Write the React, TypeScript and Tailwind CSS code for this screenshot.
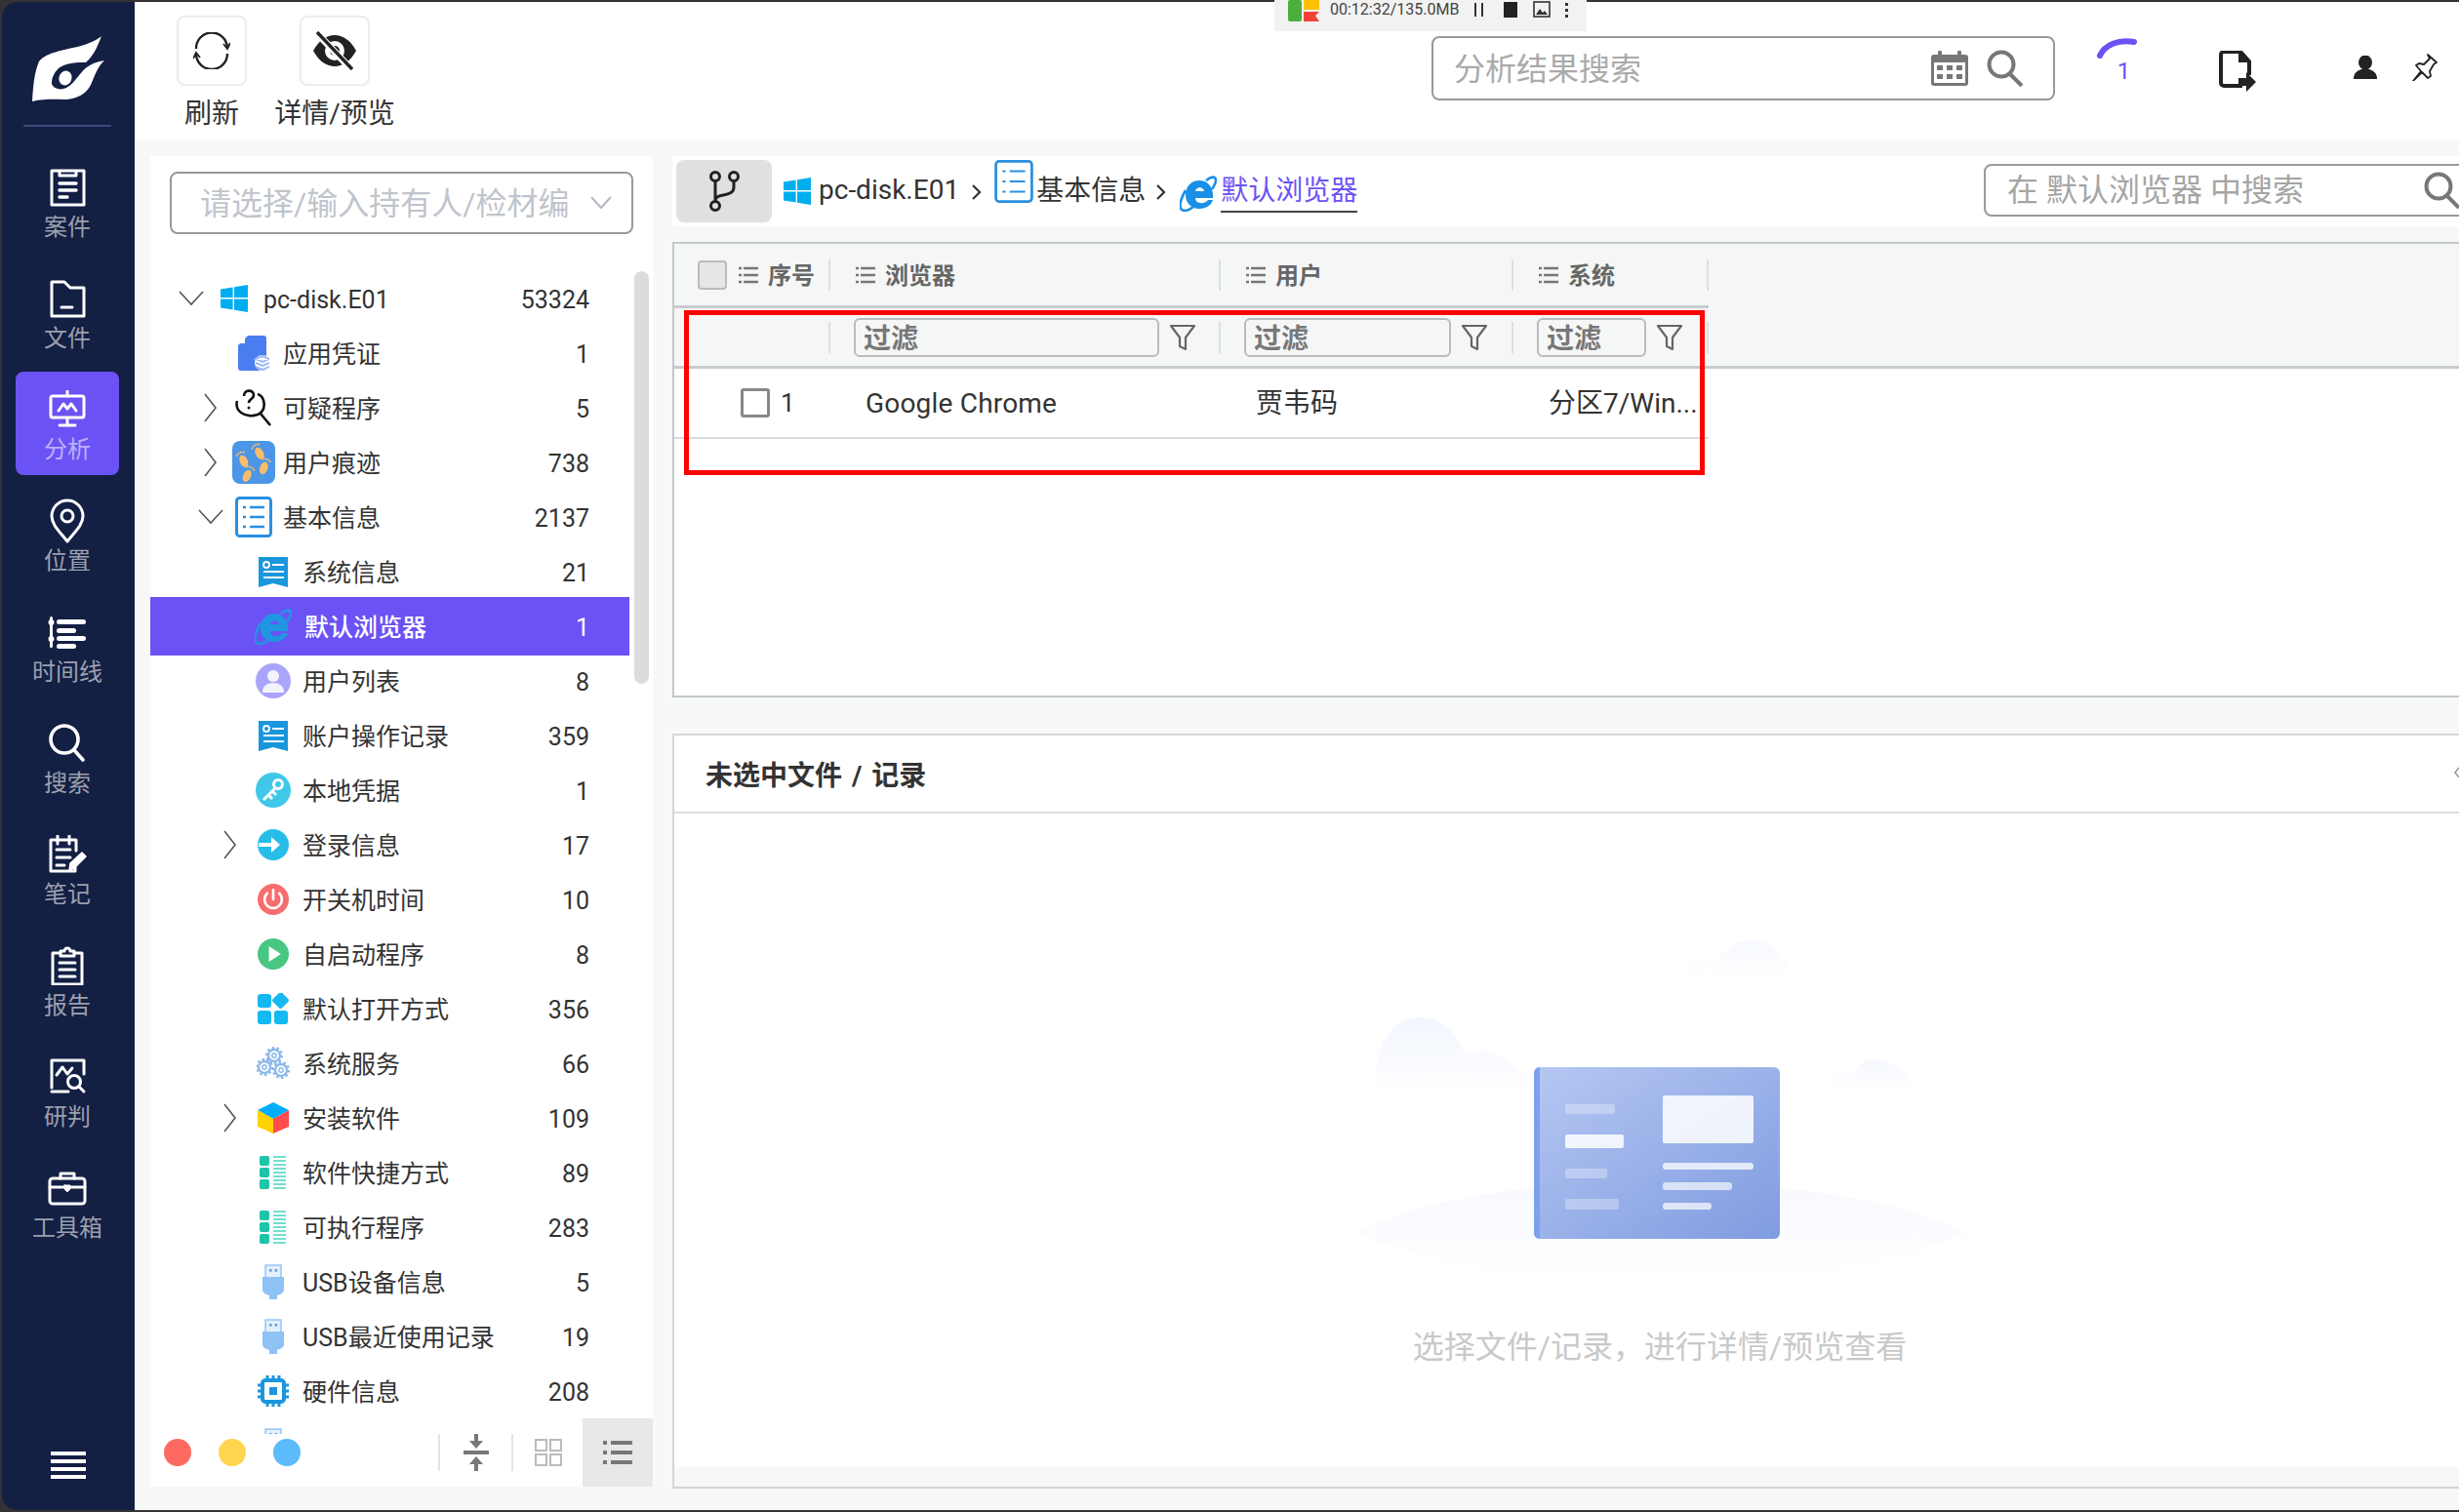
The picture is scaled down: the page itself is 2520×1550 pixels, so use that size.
import type { ReactNode } from "react";

const LineIcon = ({ children, w = 40, h = 40 }: { children: ReactNode; w?: number; h?: number }) => (
  <svg width={w} height={h} viewBox={`0 0 ${w} ${h}`} fill="none" stroke="currentColor" strokeWidth="3" strokeLinecap="round" strokeLinejoin="round">
    {children}
  </svg>
);

const navItems: { label: string; icon: ReactNode; active?: boolean }[] = [
  {
    label: "案件",
    icon: (
      <LineIcon>
        <path d="M12 3H4v35h33V3h-8v5H12V3zM12 3h17" />
        <path d="M12 16h17M12 23h17M12 30h8" strokeWidth="3.4" />
      </LineIcon>
    ),
  },
  {
    label: "文件",
    icon: (
      <LineIcon>
        <path d="M4 3h13l6 6h14v29H4V3z" />
        <path d="M14 29h11" />
      </LineIcon>
    ),
  },
  {
    label: "分析",
    active: true,
    icon: (
      <LineIcon>
        <rect x="3" y="6" width="34" height="22" rx="2" />
        <path d="M20 1v5M11 21l5-7 4 5 4-5 5 7M20 28v6M12 36h16" />
      </LineIcon>
    ),
  },
  {
    label: "位置",
    icon: (
      <LineIcon w={40} h={46}>
        <path d="M20 44C12 34 4 27 4 18a16 16 0 0 1 32 0c0 9-8 16-16 26z" />
        <circle cx="20" cy="18" r="6" />
      </LineIcon>
    ),
  },
  {
    label: "时间线",
    icon: (
      <svg width="40" height="34" viewBox="0 0 40 34" fill="#fff">
        <rect x="2" y="1" width="3" height="32" rx="1.5" />
        <circle cx="3.5" cy="7" r="3" />
        <circle cx="3.5" cy="24" r="3" />
        <rect x="9" y="4" width="30" height="5" rx="2.5" />
        <rect x="9" y="13" width="20" height="5" rx="2.5" />
        <rect x="9" y="21" width="30" height="5" rx="2.5" />
        <rect x="9" y="29" width="20" height="5" rx="2.5" />
      </svg>
    ),
  },
  {
    label: "搜索",
    icon: (
      <LineIcon>
        <circle cx="17" cy="16" r="14" strokeWidth="3.6" />
        <path d="M27 27l9 10" strokeWidth="3.6" />
      </LineIcon>
    ),
  },
  {
    label: "笔记",
    icon: (
      <LineIcon>
        <path d="M28 31v6H3V5h26v11" />
        <path d="M10 1v8M22 1v8M9 15h14M9 23h14M9 31h8" />
        <path d="M22 36l1-7 12-11 4 4-12 12-5 2z" fill="currentColor" strokeWidth="1.5" />
      </LineIcon>
    ),
  },
  {
    label: "报告",
    icon: (
      <LineIcon>
        <path d="M13 7H5v32h30V7h-8" />
        <path d="M13 10V5h4a3 3 0 0 1 6 0h4v5H13z" />
        <path d="M12 17h16M12 24h16M12 31h16" />
      </LineIcon>
    ),
  },
  {
    label: "研判",
    icon: (
      <LineIcon>
        <path d="M4 31V3h33v14M4 35h17" />
        <path d="M9 18l6-8 5 7 5-6" />
        <circle cx="27" cy="25" r="6.5" />
        <path d="M32 30l5 5" />
      </LineIcon>
    ),
  },
  {
    label: "工具箱",
    icon: (
      <LineIcon w={40} h={36}>
        <rect x="2" y="8" width="36" height="26" rx="3" />
        <path d="M13 8V3h14v5M2 17h14M24 17h14" />
        <path d="M17 15h6v4l-3 3-3-3v-4z" fill="currentColor" strokeWidth="1" />
      </LineIcon>
    ),
  },
];

const Circle = ({ color, children }: { color: string; children: ReactNode }) => (
  <svg width="36" height="36" viewBox="0 0 36 36">
    <circle cx="18" cy="18" r="18" fill={color} />
    {children}
  </svg>
);

const WinIcon = ({ s = 28 }: { s?: number }) => (
  <svg width={s} height={s} viewBox="0 0 28 28" fill="#00adef">
    <path d="M0 4.5l12.6-2v10.6H0zM14 2.3L28 0v13.1H14zM0 14.6h12.6v10.8L0 23.5zM14 14.6h14V28l-14-2.3z" />
  </svg>
);

const ListBlue = () => (
  <svg width="38" height="42" viewBox="0 0 38 42" fill="none" stroke="#2a8fe0">
    <rect x="1.5" y="1.5" width="35" height="39" rx="3" strokeWidth="3" />
    <path d="M8 11h3M15 11h15M8 21h3M15 21h15M8 31h3M15 31h15" strokeWidth="2.6" />
  </svg>
);

const CardBlue = () => (
  <svg width="32" height="32" viewBox="0 0 32 32">
    <path d="M1 1h30v31l-15-4-15 4z" fill="#1a96dc" />
    <circle cx="9" cy="9" r="3" fill="none" stroke="#fff" strokeWidth="1.8" />
    <path d="M15 9h12M6 16h21M6 22h21" stroke="#fff" strokeWidth="2" />
  </svg>
);

const IeIcon = ({ s = 38, color = "#1e98e0" }: { s?: number; color?: string }) => (
  <svg width={s} height={s} viewBox="0 0 38 38">
    <path d="M6 21C6 12 12 6 20 6s14 6 14 15v3H16c0 6 9 7 13 2h5c-2 6-8 9-14 9-8 0-14-6-14-14zM16 17h9c-1-5-8-5-9 0z" fill={color} fillRule="evenodd" />
    <path d="M27 6c5-4 10-5 10 0 0 3-2 6-4 9M6 16C1 25-1 33 2 36c3 2 8 0 12-3" fill="none" stroke={color} strokeWidth="2.6" />
  </svg>
);

const Foot = ({ x, y, r }: { x: number; y: number; r: number }) => (
  <g transform={`translate(${x} ${y}) rotate(${r})`} fill="#f9bd6a">
    <ellipse cx="0" cy="2" rx="4" ry="6.5" />
    <circle cx="-4" cy="-6.5" r="1.1" />
    <circle cx="-1.4" cy="-7.5" r="1.1" />
    <circle cx="1.2" cy="-7.5" r="1.1" />
    <circle cx="3.8" cy="-6.5" r="1.1" />
  </g>
);

const GreenList = () => (
  <svg width="28" height="34" viewBox="0 0 28 34">
    {[0, 12, 24].map((y) => (
      <g key={y}>
        <rect x="0" y={y} width="10" height="10" rx="2" fill="#1cc4a8" />
        <path d={`M14 ${y + 1}h13M14 ${y + 5}h13M14 ${y + 9}h13`} stroke="#45d6be" strokeWidth="1.6" />
      </g>
    ))}
  </svg>
);

const UsbIcon = () => (
  <svg width="26" height="36" viewBox="0 0 26 36">
    <rect x="5" y="1" width="16" height="13" fill="#e4efFb" stroke="#8fc2f5" strokeWidth="1.4" />
    <rect x="9" y="5" width="2.6" height="2.6" fill="#5f9fe4" />
    <rect x="14.6" y="5" width="2.6" height="2.6" fill="#5f9fe4" />
    <path d="M2 13h22v13c0 3-3 5-7 6v4h-8v-4c-4-1-7-3-7-6z" fill="#8fc2f5" />
  </svg>
);

const GearGlyph = ({ x, y }: { x: number; y: number }) => (
  <g transform={`translate(${x} ${y})`} fill="none" stroke="#8cb8ea">
    <circle r="6" strokeWidth="2.4" strokeDasharray="none" />
    <circle r="8" strokeWidth="2.2" strokeDasharray="2.5 2.5" />
    <circle r="2.2" strokeWidth="1.4" />
  </g>
);

type Row = { level: number; label?: string; count?: string; arrow?: "open" | "closed"; icon: ReactNode; selected?: boolean };

const rows: Row[] = [
  { level: 0, label: "pc-disk.E01", count: "53324", arrow: "open", icon: <WinIcon /> },
  {
    level: 1,
    label: "应用凭证",
    count: "1",
    icon: (
      <svg width="32" height="36" viewBox="0 0 32 36">
        <path d="M10 0h16a3 3 0 0 1 3 3v30a3 3 0 0 1-3 3H3a3 3 0 0 1-3-3V10z" fill="#4a7ef0" />
        <path d="M7 1v7H1z" fill="#fff" />
        <circle cx="25" cy="28" r="8" fill="#fff" />
        <path d="M25 21l7 3-7 3-7-3zM18 28l7 3 7-3M18 32l7 3 7-3" fill="none" stroke="#9db8f5" strokeWidth="2" />
      </svg>
    ),
  },
  {
    level: 1,
    label: "可疑程序",
    count: "5",
    arrow: "closed",
    icon: (
      <svg width="38" height="40" viewBox="0 0 38 40" fill="none" stroke="#111" strokeWidth="2.6">
        <path d="M23 6c7 2 8 12 5 17-4 6-15 7-22 2-4-3-5-8-4-12" />
        <path d="M26 26l10 12" />
        <path d="M9 8c0-7 10-7 10-1 0 4-5 4-5 8" />
        <circle cx="14" cy="20" r="1.5" fill="#111" stroke="none" />
      </svg>
    ),
  },
  {
    level: 1,
    label: "用户痕迹",
    count: "738",
    arrow: "closed",
    icon: (
      <svg width="44" height="44" viewBox="0 0 44 44">
        <rect width="44" height="44" rx="8" fill="#4b96e6" />
        <Foot x={11} y={19} r={-25} />
        <Foot x={16} y={34} r={25} />
        <Foot x={27} y={11} r={-30} />
        <Foot x={33} y={26} r={20} />
      </svg>
    ),
  },
  { level: 1, label: "基本信息", count: "2137", arrow: "open", icon: <ListBlue /> },
  { level: 2, label: "系统信息", count: "21", icon: <CardBlue /> },
  { level: 2, label: "默认浏览器", count: "1", selected: true, icon: <IeIcon /> },
  {
    level: 2,
    label: "用户列表",
    count: "8",
    icon: (
      <Circle color="#a9a5fa">
        <circle cx="18" cy="13" r="6" fill="#f3f3fd" />
        <path d="M7 29c0-12 22-12 22 0 0 1-1 1-2 1H9c-1 0-2 0-2-1z" fill="#f3f3fd" />
      </Circle>
    ),
  },
  { level: 2, label: "账户操作记录", count: "359", icon: <CardBlue /> },
  {
    level: 2,
    label: "本地凭据",
    count: "1",
    icon: (
      <Circle color="#3fc8e8">
        <circle cx="23" cy="12" r="4.5" fill="none" stroke="#fff" strokeWidth="3" />
        <path d="M20 16L8 28M13 23l4 4M17 19l4 4" stroke="#fff" strokeWidth="3" />
      </Circle>
    ),
  },
  {
    level: 2,
    label: "登录信息",
    count: "17",
    arrow: "closed",
    icon: (
      <svg width="32" height="32" viewBox="0 0 32 32">
        <circle cx="16" cy="16" r="16" fill="#28bde8" />
        <path d="M1 14h13V8l9 8-9 8v-6H1z" fill="#fff" />
      </svg>
    ),
  },
  {
    level: 2,
    label: "开关机时间",
    count: "10",
    icon: (
      <svg width="32" height="32" viewBox="0 0 36 36">
        <circle cx="18" cy="18" r="18" fill="#f76c6c" />
        <path d="M11 11a10 10 0 1 0 14 0M18 7v11" fill="none" stroke="#fff" strokeWidth="3" strokeLinecap="round" />
      </svg>
    ),
  },
  {
    level: 2,
    label: "自启动程序",
    count: "8",
    icon: (
      <svg width="32" height="32" viewBox="0 0 36 36">
        <circle cx="18" cy="18" r="18" fill="#48c782" />
        <path d="M13 9l14 9-14 9z" fill="#fff" />
      </svg>
    ),
  },
  {
    level: 2,
    label: "默认打开方式",
    count: "356",
    icon: (
      <svg width="32" height="32" viewBox="0 0 32 32" fill="#14b8f2">
        <rect x="0" y="1" width="14" height="14" rx="3" />
        <rect x="17" y="1" width="13" height="13" rx="2" transform="rotate(45 23.5 7.5)" />
        <rect x="0" y="18" width="14" height="14" rx="3" />
        <rect x="17" y="18" width="14" height="14" rx="3" />
      </svg>
    ),
  },
  {
    level: 2,
    label: "系统服务",
    count: "66",
    icon: (
      <svg width="34" height="34" viewBox="0 0 34 34">
        <GearGlyph x={18} y={9} />
        <GearGlyph x={8} y={21} />
        <GearGlyph x={25} y={24} />
      </svg>
    ),
  },
  {
    level: 2,
    label: "安装软件",
    count: "109",
    arrow: "closed",
    icon: (
      <svg width="32" height="32" viewBox="0 0 32 32">
        <path d="M16 0l16 8-16 9L0 8z" fill="#00aeff" />
        <path d="M0 8l16 9v15L0 25z" fill="#ffd200" />
        <path d="M32 8l-16 9v15l16-7z" fill="#ff4d4d" />
      </svg>
    ),
  },
  { level: 2, label: "软件快捷方式", count: "89", icon: <GreenList /> },
  { level: 2, label: "可执行程序", count: "283", icon: <GreenList /> },
  { level: 2, label: "USB设备信息", count: "5", icon: <UsbIcon /> },
  { level: 2, label: "USB最近使用记录", count: "19", icon: <UsbIcon /> },
  {
    level: 2,
    label: "硬件信息",
    count: "208",
    icon: (
      <svg width="32" height="32" viewBox="0 0 32 32" fill="none" stroke="#1a96dc">
        <rect x="5" y="5" width="22" height="22" rx="3" strokeWidth="4" />
        <rect x="12" y="12" width="8" height="8" fill="#1a96dc" stroke="none" />
        <path d="M10 0v5M16 0v5M22 0v5M10 27v5M16 27v5M22 27v5M0 10h5M0 16h5M0 22h5M27 10h5M27 16h5M27 22h5" strokeWidth="3" />
      </svg>
    ),
  },
  { level: 2, icon: <UsbIcon /> },
];

const levelPad = ["pl-[22px]", "pl-[42px]", "pl-[62px]"];

const Chevron = ({ open }: { open: boolean }) =>
  open ? (
    <svg width="26" height="16" viewBox="0 0 26 16" fill="none" stroke="#555" strokeWidth="1.6">
      <path d="M1 1l12 13L25 1" />
    </svg>
  ) : (
    <svg width="14" height="30" viewBox="0 0 14 30" fill="none" stroke="#555" strokeWidth="1.6">
      <path d="M1 1l11 14L1 29" />
    </svg>
  );

const SearchGlyph = ({ s = 38 }: { s?: number }) => (
  <svg width={s} height={s} viewBox="0 0 38 38" fill="none" stroke="#777" strokeWidth="4">
    <circle cx="15" cy="15" r="12.5" />
    <path d="M24 25l12 12" />
  </svg>
);

const Lines = () => (
  <svg width="20" height="18" viewBox="0 0 20 18" stroke="#777" strokeWidth="2.4">
    <path d="M0 2h3M5 2h15M0 9h3M5 9h15M0 16h3M5 16h15" />
  </svg>
);

const Funnel = () => (
  <svg width="28" height="28" viewBox="0 0 28 28" fill="none" stroke="#666" strokeWidth="2.2" strokeLinejoin="round">
    <path d="M2 2h24l-9 12v12l-6-3v-9z" />
  </svg>
);

const Crumb = () => (
  <svg width="10" height="18" viewBox="0 0 10 18" fill="none" stroke="#333" strokeWidth="2.2">
    <path d="M1 2l7 7-7 7" />
  </svg>
);

const columns = [
  { label: "浏览器", w: "w-[400px]", input: "w-[313px]" },
  { label: "用户", w: "w-[300px]", input: "w-[212px]" },
  { label: "系统", w: "w-[200px]", input: "w-[112px]" },
];

export default function App() {
  return (
    <div className="w-[2520px] h-[1550px] bg-[#333333] py-[2px] overflow-hidden relative font-['Roboto','Noto_Sans_CJK_SC',sans-serif] text-[#333]">
      <div className="flex h-full">
        {/* sidebar */}
        <aside className="w-[136px] ml-[2px] shrink-0 bg-[#131f43] rounded-l-[16px] flex flex-col pt-[18px] pb-[32px]">
          <svg width="110" height="110" viewBox="0 0 110 110" className="ml-[18px]">
            <path d="M13 84C14 68 15 55 20 43C28 33 48 31 63 27C72 24 78 22 84 17C80 27 77 36 68 44C60 44 48 44 40 50C35 55 33 60 33 66C35 71 42 73 48 70C58 65 62 52 72 47C77 44 82 43 87 42C80 48 77 58 73 67C68 77 58 81 48 82C38 82 25 81 13 84Z" fill="#fff" />
            <ellipse cx="47" cy="60" rx="6.5" ry="7.5" transform="rotate(20 47 60)" fill="#fff" />
          </svg>
          <div className="h-[2px] w-[90px] ml-[22px] bg-[#3d4a7a] -mt-[2px]" />
          <nav className="flex flex-col gap-2 mt-[23px] ml-[14px]">
            {navItems.map((n) => (
              <div
                key={n.label}
                className={`w-[106px] h-[106px] rounded-[8px] flex flex-col items-center pt-[19px] text-[#fff] ${n.active ? "bg-[#6b52f5]" : ""}`}
              >
                <div className="h-10 flex items-center justify-center">{n.icon}</div>
                <span className={`text-[24px] leading-[30px] mt-[6px] ${n.active ? "text-[#bdb2fa]" : "text-[#9ca0ae]"}`}>{n.label}</span>
              </div>
            ))}
          </nav>
          <div className="mt-auto ml-[50px] w-[36px] flex flex-col gap-[4px]">
            <div className="h-[4px] bg-white" />
            <div className="h-[4px] bg-white" />
            <div className="h-[4px] bg-white" />
            <div className="h-[4px] bg-white" />
          </div>
        </aside>

        <main className="flex-1 min-w-0 flex flex-col bg-[#f7f8f8]">
          {/* toolbar */}
          <header className="h-[142px] shrink-0 bg-white flex items-start pl-[43px] pr-[22px]">
            <div className="flex flex-col items-center w-[72px] pt-[14px]">
              <div className="w-[72px] h-[72px] rounded-[8px] border-2 border-[#ececec] flex items-center justify-center">
                <svg width="38" height="38" viewBox="0 0 38 38" fill="none" stroke="#222" strokeWidth="2.4">
                  <path d="M3 17A16 16 0 0 1 35 16" />
                  <path d="M35 22A16 16 0 0 1 3 22" />
                  <path d="M31 12l4 5 3-6M7 26l-4-5-3 6" strokeWidth="1.8" />
                </svg>
              </div>
              <span className="text-[28px] leading-[34px] mt-3 whitespace-nowrap">刷新</span>
            </div>
            <div className="flex flex-col items-center w-[124px] ml-[28px] pt-[14px]">
              <div className="w-[72px] h-[72px] rounded-[8px] border-2 border-[#ececec] flex items-center justify-center">
                <svg width="46" height="40" viewBox="0 0 46 40">
                  <path d="M1 20C7 9 15 4 23 4s16 5 22 16c-6 11-14 16-22 16S7 31 1 20z" fill="#222" />
                  <circle cx="23" cy="20" r="10" fill="#fff" />
                  <circle cx="23" cy="20" r="5" fill="#222" />
                  <path d="M4 1l36 38" stroke="#fff" strokeWidth="7" />
                  <path d="M5 1l36 38" stroke="#222" strokeWidth="3.4" />
                </svg>
              </div>
              <span className="text-[28px] leading-[34px] mt-3 whitespace-nowrap">详情/预览</span>
            </div>

            <div className="ml-auto mt-[35px] w-[639px] h-[66px] rounded-[8px] border-2 border-[#999] flex items-center pl-[21px] pr-[30px]">
              <span className="text-[32px] text-[#aaa] mt-[2px]">分析结果搜索</span>
              <svg width="40" height="38" viewBox="0 0 40 38" className="ml-auto">
                <rect x="1" y="5" width="38" height="32" rx="3" fill="#777" />
                <rect x="4" y="13" width="32" height="21" fill="#fff" />
                <rect x="8" y="1" width="4" height="7" rx="1" fill="#777" />
                <rect x="28" y="1" width="4" height="7" rx="1" fill="#777" />
                <path d="M7 16h6v5H7zM17 16h6v5h-6zM27 16h6v5h-6zM7 25h6v5H7zM17 25h6v5h-6zM27 25h6v5h-6z" fill="#777" />
              </svg>
              <div className="ml-[18px]">
                <SearchGlyph />
              </div>
            </div>

            <div className="ml-[43px] mt-[36px] w-[41px] flex flex-col items-center">
              <svg width="41" height="22" viewBox="0 0 41 22" fill="none" stroke="#6b52f5" strokeWidth="6" strokeLinecap="round">
                <path d="M3 19C8 8 22 2 38 5" />
              </svg>
              <span className="text-[24px] leading-[26px] text-[#6b52f5] ml-[14px]">1</span>
            </div>
            <svg width="38" height="42" viewBox="0 0 38 42" className="ml-[84px] mt-[50px]" fill="none" stroke="#222">
              <path d="M24 36H5a3 3 0 0 1-3-3V4a3 3 0 0 1 3-3h17l9 10v14" strokeWidth="4" />
              <path d="M21 1v10h10z" fill="#222" strokeWidth="2" />
              <path d="M20 28h8v-6l10 10-10 10v-6h-8z" fill="#222" stroke="none" />
            </svg>
            <svg width="24" height="24" viewBox="0 0 24 24" className="ml-[100px] mt-[55px]" fill="#222">
              <ellipse cx="12" cy="7" rx="7" ry="7.5" />
              <path d="M0 24c0-6 3-8 8-10h8c5 2 8 4 8 10z" />
            </svg>
            <svg width="28" height="28" viewBox="0 0 28 28" className="ml-[34px] mt-[53px]" fill="none" stroke="#222" strokeWidth="1.8" strokeLinejoin="round">
              <path d="M18 1l9 8-3 2-4 7 1 5-3 2-6-6-9 9 8-10-5-6 3-2 5 1 6-6z" />
            </svg>
          </header>

          <div className="flex-1 min-h-0 flex pt-4 pl-4 gap-5">
            {/* tree panel */}
            <section className="w-[515px] h-[1364px] shrink-0 bg-white flex flex-col relative">
              <div className="mx-5 mt-4 h-[64px] shrink-0 rounded-[8px] border-2 border-[#999] flex items-center pl-[29px] pr-[20px] overflow-hidden">
                <span className="text-[32px] text-[#c0c4cc] whitespace-nowrap mt-[2px]">请选择/输入持有人/检材编</span>
                <svg width="22" height="14" viewBox="0 0 22 14" fill="none" stroke="#b4b8c0" strokeWidth="2" className="ml-auto">
                  <path d="M1 1l10 11L21 1" />
                </svg>
              </div>
              <div className="flex-1 min-h-0 overflow-hidden mt-[38px] relative">
                {rows.map((r, i) => (
                  <div
                    key={i}
                    className={`flex items-center w-[491px] ${levelPad[r.level]} pr-[41px] ${r.selected ? "h-[60px] -my-[2px] bg-[#6b52f5] text-white font-medium relative" : "h-[56px]"}`}
                  >
                    <div className="w-[40px] h-[40px] flex items-center justify-center shrink-0">
                      {r.arrow ? <Chevron open={r.arrow === "open"} /> : null}
                    </div>
                    <div className="w-[48px] h-[44px] flex items-center justify-center shrink-0">{r.icon}</div>
                    <span className={`text-[25px] mt-[3px] whitespace-nowrap ${r.selected ? "ml-[8px]" : "ml-[6px]"}`}>{r.label}</span>
                    <span className="text-[25px] mt-[3px] ml-auto font-normal">{r.count}</span>
                  </div>
                ))}
                <div className="absolute left-[496px] top-0 w-[15px] h-[423px] rounded-full bg-[#dcdcdc]" />
              </div>
              <div className="h-[54px] shrink-0 bg-white flex items-center pl-[14px] pb-[16px] relative">
                <div className="w-[28px] h-[28px] rounded-full bg-[#ff6a60]" />
                <div className="w-[28px] h-[28px] rounded-full bg-[#ffd550] ml-[28px]" />
                <div className="w-[28px] h-[28px] rounded-full bg-[#5bbbfb] ml-[28px]" />
                <div className="w-[2px] h-[38px] bg-[#e4e4e4] ml-[141px]" />
                <svg width="26" height="38" viewBox="0 0 26 38" className="ml-[24px]" fill="#777">
                  <path d="M11 0h4v7h5l-7 8-7-8h5zM0 17h26v4H0zM13 23l7 8h-5v7h-4v-7H6z" />
                </svg>
                <div className="w-[2px] h-[38px] bg-[#e4e4e4] ml-[23px]" />
                <svg width="28" height="28" viewBox="0 0 28 28" className="ml-[22px]" fill="none" stroke="#bbb" strokeWidth="2">
                  <rect x="1" y="1" width="11" height="11" />
                  <rect x="16" y="1" width="11" height="11" />
                  <rect x="1" y="16" width="11" height="11" />
                  <rect x="16" y="16" width="11" height="11" />
                </svg>
                <div className="absolute right-0 bottom-0 w-[72px] h-[70px] bg-[#e8e8e8] flex items-center justify-center">
                  <svg width="30" height="26" viewBox="0 0 30 26" fill="#777">
                    <path d="M0 1h4v4H0zM8 1h22v4H8zM0 11h4v4H0zM8 11h22v4H8zM0 21h4v4H0zM8 21h22v4H8z" />
                  </svg>
                </div>
              </div>
            </section>

            <div className="flex-1 min-w-0 flex flex-col">
              {/* breadcrumb */}
              <div className="h-[72px] shrink-0 bg-white flex items-center pl-1 text-[28px]">
                <div className="w-[98px] h-[64px] rounded-[8px] bg-[#e0e0e0] flex items-center justify-center">
                  <svg width="32" height="44" viewBox="0 0 32 44" fill="none" stroke="#222" strokeWidth="3">
                    <circle cx="7" cy="7" r="4.5" />
                    <circle cx="26" cy="7" r="4.5" />
                    <circle cx="7" cy="37" r="4.5" />
                    <path d="M7 12v20M26 12v6c0 6-6 7-11 8-5 1-8 2-8 6" />
                  </svg>
                </div>
                <div className="ml-3">
                  <WinIcon />
                </div>
                <span className="ml-2 -mt-[2px]">pc-disk.E01</span>
                <div className="ml-[13px] mt-[2px]">
                  <Crumb />
                </div>
                <div className="ml-[13px] -mt-[20px]">
                  <svg width="40" height="46" viewBox="0 0 38 42" fill="none" stroke="#2a8fe0">
                    <rect x="1.5" y="1.5" width="35" height="39" rx="3" strokeWidth="2.6" />
                    <path d="M8 11h3M15 11h15M8 21h3M15 21h15M8 31h3M15 31h15" strokeWidth="2" />
                  </svg>
                </div>
                <span className="ml-[3px]">基本信息</span>
                <div className="ml-[11px] mt-[2px]">
                  <Crumb />
                </div>
                <div className="ml-[14px] mt-[4px]">
                  <IeIcon s={38} color="#1a8fe8" />
                </div>
                <span className="ml-[4px] mt-[1px] text-[#6b52f5] border-b-2 border-[#444] h-[42px] leading-[40px]">默认浏览器</span>
                <div className="ml-auto -mr-[40px] shrink-0 w-[527px] h-[54px] rounded-[8px] border-2 border-[#999] flex items-center pl-[22px] pr-[36px] -mt-[2px]">
                  <span className="text-[32px] text-[#a5a5a5] whitespace-pre">在 默认浏览器 中搜索</span>
                  <div className="ml-auto">
                    <SearchGlyph />
                  </div>
                </div>
              </div>

              {/* table */}
              <div className="mt-4 h-[467px] shrink-0 border-2 border-r-0 border-[#c4c8cc] bg-white relative">
                <div className="bg-[#f5f6f6]">
                  <div className="w-[1060px] h-[66px] border-b-[3px] border-[#c8cbce] flex items-center text-[24px] font-bold text-[#666]">
                    <div className="w-[160px] h-[32px] border-r-2 border-[#dcdfe2] flex items-center pl-[24px]">
                      <div className="w-[30px] h-[30px] rounded-[4px] bg-[#e6e6e6] border-2 border-[#bbb]" />
                      <div className="ml-3">
                        <Lines />
                      </div>
                      <span className="ml-[10px] mt-[2px]">序号</span>
                    </div>
                    {columns.map((c) => (
                      <div key={c.label} className={`${c.w} h-[32px] border-r-2 border-[#dcdfe2] flex items-center pl-[26px]`}>
                        <Lines />
                        <span className="ml-[10px] mt-[2px]">{c.label}</span>
                      </div>
                    ))}
                  </div>
                  <div className="h-[62px] border-b-[3px] border-[#c8cbce] flex items-center">
                    <div className="w-[160px] h-[32px] border-r-2 border-[#dcdfe2]" />
                    {columns.map((c) => (
                      <div key={c.label} className={`${c.w} h-[32px] border-r-2 border-[#dcdfe2] flex items-center pl-[24px]`}>
                        <div className={`${c.input} h-[40px] shrink-0 rounded-[6px] border-2 border-[#bbb] flex items-center pl-[8px] pt-[5px] text-[28px] font-bold text-[#777]`}>过滤</div>
                        <div className="ml-[10px] shrink-0">
                          <Funnel />
                        </div>
                      </div>
                    ))}
                  </div>
                </div>
                <div className="w-[1060px] h-[72px] border-b-2 border-[#d8dbde] flex items-center text-[28px]">
                  <div className="w-[160px] flex items-center pl-[68px]">
                    <div className="w-[30px] h-[30px] rounded-[3px] border-[3px] border-[#888] bg-white" />
                    <span className="ml-[11px] text-[26px]">1</span>
                  </div>
                  <div className="w-[400px] pl-[36px] mt-[2px] tracking-[0.2px]">Google Chrome</div>
                  <div className="w-[300px] pl-[36px] mt-[2px]">贾韦码</div>
                  <div className="w-[200px] pl-[36px] mt-[2px] whitespace-nowrap">分区7/Win...</div>
                </div>
                {/* red annotation over the table */}
                <div className="absolute left-[10px] top-[68px] w-[1046px] h-[169px] border-[5px] border-[#ff0000]" />
              </div>

              {/* details */}
              <div className="mt-[37px] h-[774px] shrink-0 border-2 border-r-0 border-[#d4d6d8] flex flex-col overflow-hidden bg-white">
                <div className="h-[80px] shrink-0 border-b-2 border-[#dcdcdc] flex items-center pl-[32px] pt-[5px] text-[28px] font-bold [word-spacing:3px] relative">
                  未选中文件 / 记录
                  <svg width="5" height="12" viewBox="0 0 5 12" className="absolute right-0 top-[32px]" fill="none" stroke="#999" strokeWidth="1.6">
                    <path d="M5 1L1 6l4 5" />
                  </svg>
                </div>
                <div className="flex-1 min-h-0 w-[2020px] flex flex-col items-center pt-[125px]">
                  <svg width="640" height="370" viewBox="0 0 640 370">
                    <defs>
                      <linearGradient id="cloud" x1="0" y1="0" x2="0" y2="1">
                        <stop offset="0" stopColor="#f2f6fe" />
                        <stop offset="1" stopColor="#ffffff" />
                      </linearGradient>
                      <linearGradient id="hill" x1="0" y1="0" x2="0" y2="1">
                        <stop offset="0" stopColor="#f7f9fe" />
                        <stop offset="1" stopColor="#ffffff" />
                      </linearGradient>
                      <linearGradient id="card" x1="0" y1="0" x2="1" y2="1">
                        <stop offset="0" stopColor="#b6c7f2" />
                        <stop offset="1" stopColor="#7f9ce0" />
                      </linearGradient>
                    </defs>
                    <path d="M28 163C26 120 40 84 75 84c26 0 38 20 46 40 8-6 24-8 36 0 12 8 30 24 42 39z" fill="url(#cloud)" />
                    <path d="M343 40c0-12 20-16 36-12 6-16 22-23 36-23 22 0 38 22 42 35z" fill="url(#cloud)" opacity="0.7" />
                    <path d="M492 155c2-10 12-18 28-14 4-10 12-14 20-14 18 0 36 14 38 28z" fill="url(#cloud)" opacity="0.8" />
                    <path d="M10 305C130 235 500 235 635 305 540 345 410 357 320 357 230 357 100 345 10 305z" fill="url(#hill)" />
                    <rect x="191" y="135" width="252" height="176" rx="6" fill="url(#card)" />
                    <path d="M197 135a6 6 0 0 0-6 6v164a6 6 0 0 0 6 6z" fill="#7f9ff0" />
                    <g fill="#fff">
                      <rect x="223" y="173" width="51" height="10" rx="2" opacity="0.3" />
                      <rect x="223" y="204" width="60" height="14" rx="2" opacity="0.85" />
                      <rect x="223" y="239" width="43" height="10" rx="2" opacity="0.3" />
                      <rect x="223" y="270" width="55" height="11" rx="2" opacity="0.3" />
                      <rect x="323" y="164" width="93" height="49" rx="2" opacity="0.85" />
                      <rect x="323" y="233" width="93" height="7" rx="3" opacity="0.75" />
                      <rect x="323" y="253" width="71" height="8" rx="3" opacity="0.65" />
                      <rect x="323" y="274" width="50" height="7" rx="3" opacity="0.7" />
                    </g>
                  </svg>
                  <span className="text-[32px] leading-[40px] mt-[32px] text-[#c9c9c9] whitespace-nowrap">选择文件/记录，进行详情/预览查看</span>
                </div>
                <div className="h-[20px] shrink-0 bg-[#f7f7f7]" />
              </div>
            </div>
          </div>
        </main>
      </div>

      {/* screen recorder strip, floats over the window */}
      <div className="absolute left-[1306px] top-0 w-[320px] h-[32px] bg-[#f2f2f2] flex items-start pl-[14px]">
        <svg width="32" height="22" viewBox="0 0 32 22">
          <rect x="0" y="0" width="14" height="22" rx="2" fill="#4caf3c" />
          <path d="M16 0h16v10H16z" fill="#ffc107" />
          <path d="M16 12h16l-4 4 4 6h-16z" fill="#f44336" />
        </svg>
        <span className="ml-[11px] text-[16px] leading-[20px] text-[#444] whitespace-nowrap">00:12:32/135.0MB</span>
        <div className="ml-[16px] mt-[3px] w-[9px] h-[14px] border-x-2 border-[#333]" />
        <div className="ml-[21px] mt-[2px] w-[14px] h-[16px] bg-[#222]" />
        <svg width="18" height="18" viewBox="0 0 18 18" className="ml-[16px] mt-[1px]" fill="none" stroke="#333" strokeWidth="1.6">
          <rect x="1" y="1" width="16" height="15" />
          <path d="M3 14l4-6 3 4 2-2 3 4z" fill="#333" stroke="none" />
        </svg>
        <div className="ml-[15px] mt-[3px] flex flex-col gap-[3px]">
          <div className="w-[3px] h-[3px] bg-[#333]" />
          <div className="w-[3px] h-[3px] bg-[#333]" />
          <div className="w-[3px] h-[3px] bg-[#333]" />
        </div>
      </div>
    </div>
  );
}
